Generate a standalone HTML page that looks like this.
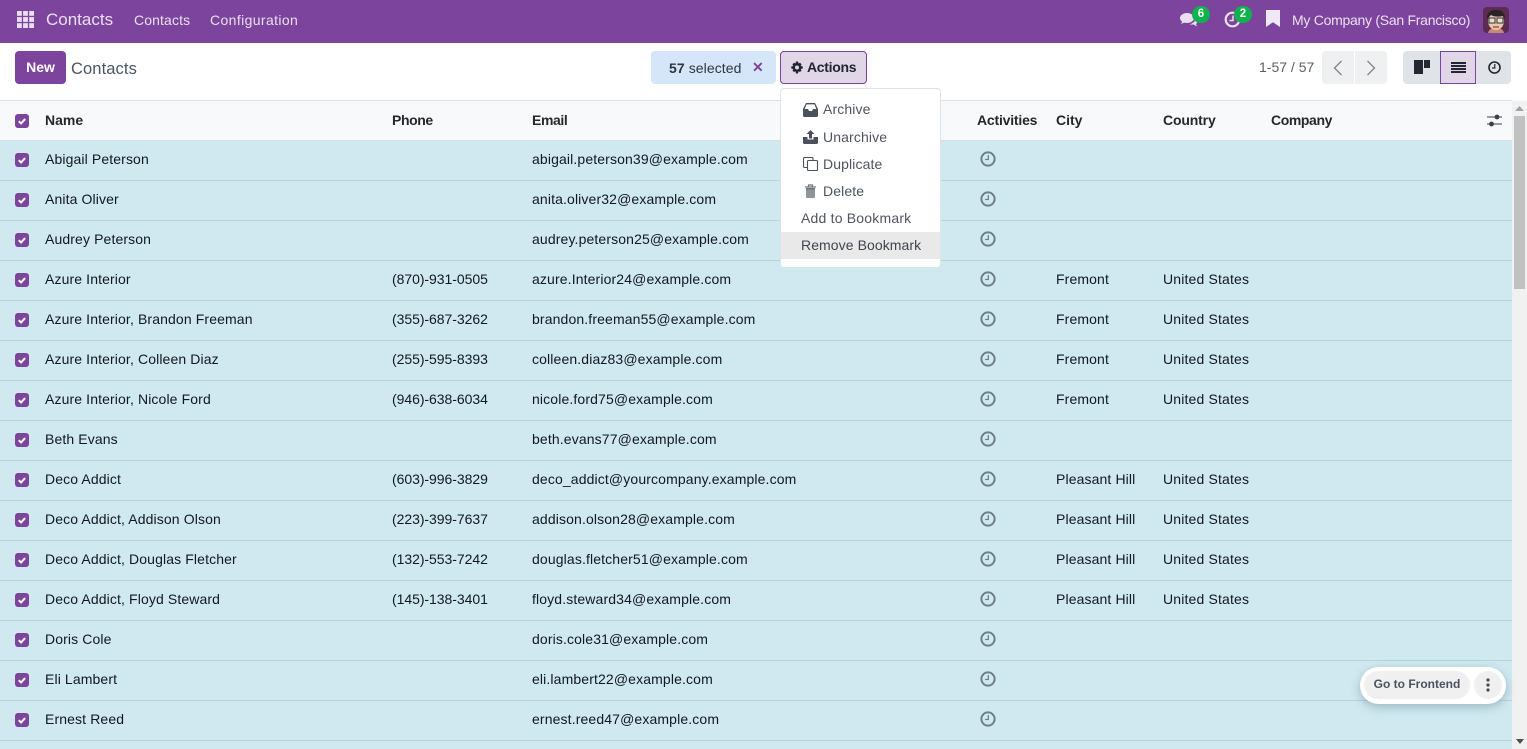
<!DOCTYPE html>
<html lang="en"><head><meta charset="utf-8"><title>Contacts</title>
<style>
*{box-sizing:border-box}
html,body{margin:0;padding:0;width:1527px;height:749px;overflow:hidden;background:#fff}
body{position:relative;font-family:"Liberation Sans",sans-serif;font-size:14px;color:#111827}
.a{position:absolute;white-space:nowrap}
.nav{position:absolute;left:0;top:0;width:1527px;height:43px;background:#7c449c}
.nav .a{color:#eadff0;line-height:20px;top:10px}
.btn{position:absolute;border-radius:4px}
.list{position:absolute;left:0;top:100px;width:1512px;height:649px;overflow:hidden}
.head{position:absolute;left:0;top:0;width:1512px;height:41px;background:#f8f9fb;border-top:1px solid #dee2e6;border-bottom:1px solid #d8dde3}
.head .a{top:9px;line-height:20px;font-weight:bold;color:#25282d}
.r{position:absolute;left:0;width:1512px;height:40px;background:#d0e9f1;border-bottom:1px solid #b8d3dc}
.r .a{top:8px;line-height:20px;color:#101820}
.n{left:45px;letter-spacing:.12px}.p{left:392px;letter-spacing:-.05px}.e{left:532px;letter-spacing:.13px}.c{left:1056px;letter-spacing:.12px}.y{left:1163px;letter-spacing:.16px}
.cb{position:absolute;left:15px;width:14px;height:14px;background:#7c449c;border-radius:3px}
.r .cb{top:12px}
.cb svg{position:absolute;left:0;top:0}
.clk{position:absolute;left:980px;top:10px}
.menu{position:absolute;left:780px;top:88px;width:161px;height:180px;background:#fff;border:1px solid #dfe3e8;border-radius:4px;z-index:3}
.mi{position:absolute;color:#4f5560;line-height:20px;white-space:nowrap;letter-spacing:.12px}
.menu svg{position:absolute}
</style></head><body>

<svg width="0" height="0" style="position:absolute"><defs>
<symbol id="ck" viewBox="0 0 14 14"><path d="M3.800 7.200l2.200 2.200 4.200-4.400" fill="none" stroke="#fff" stroke-width="2"/></symbol>
<symbol id="cl" viewBox="0 0 16 16"><circle cx="8" cy="8" r="6.600" fill="none" stroke="#6f7f88" stroke-width="2"/><path d="M8.300 4v4.500H5" fill="none" stroke="#6f7f88" stroke-width="1.300"/></symbol>
</defs></svg>

<div class="nav">
<svg class="a" style="left:17px;top:11px" width="17" height="17" viewBox="0 0 17 17" fill="#eadff0"><rect x="0" y="0" width="4.800" height="4.800"/><rect x="6.100" y="0" width="4.800" height="4.800"/><rect x="12.200" y="0" width="4.800" height="4.800"/><rect x="0" y="6.100" width="4.800" height="4.800"/><rect x="6.100" y="6.100" width="4.800" height="4.800"/><rect x="12.200" y="6.100" width="4.800" height="4.800"/><rect x="0" y="12.200" width="4.800" height="4.800"/><rect x="6.100" y="12.200" width="4.800" height="4.800"/><rect x="12.200" y="12.200" width="4.800" height="4.800"/></svg>
<span class="a" style="left:46px;font-size:17px">Contacts</span>
<span class="a" style="left:134px;letter-spacing:.12px">Contacts</span>
<span class="a" style="left:210px;letter-spacing:.38px">Configuration</span>
<svg class="a" style="left:1180px;top:11px" width="18" height="16" viewBox="0 0 18 16" fill="#eadff0"><ellipse cx="7" cy="7" rx="7" ry="5"/><path d="M2.500 10l-1.500 3 4.500-2z"/><path d="M15.500 8.500c2 1.500 2 3.500.5 4.500l1 2.500-3.500-2H9c2.500-.5 6-2.500 6.500-5z"/></svg>
<div class="a" style="left:1192px;top:6px;width:18px;height:17px;border-radius:9px;background:#0fb34d;color:#fff;font-size:11.500px;font-weight:bold;text-align:center;line-height:17px">6</div>
<svg class="a" style="left:1224px;top:11px" width="17" height="17" viewBox="0 0 17 17"><circle cx="8.500" cy="8.500" r="6.800" fill="none" stroke="#eadff0" stroke-width="2.200"/><path d="M9 4.500V9.500H5.500" fill="none" stroke="#eadff0" stroke-width="1.500"/></svg>
<div class="a" style="left:1234px;top:6px;width:18px;height:17px;border-radius:9px;background:#0fb34d;color:#fff;font-size:11.500px;font-weight:bold;text-align:center;line-height:17px">2</div>
<svg class="a" style="left:1266px;top:10px" width="14" height="17" viewBox="0 0 14 17"><path d="M0 0h14v17L7 12.200 0 17z" fill="#f0e8f5"/></svg>
<span class="a" style="left:1292px;letter-spacing:-.27px">My Company (San Francisco)</span>
<svg class="a" style="left:1483px;top:7px;border-radius:4px" width="26" height="26" viewBox="0 0 26 26"><rect width="26" height="26" fill="#5d2c55"/><path d="M5 26c1-4 4-5 8-5s7 1 8 5z" fill="#c98a70"/><ellipse cx="13" cy="14" rx="8" ry="9" fill="#ecc6a8"/><path d="M4 12C3 5 9 2 14 3c5 0 8 3 8 9l-2-3c-4 1-9 1-12-1z" fill="#2b2426"/><rect x="6" y="11" width="6" height="5" fill="#e2e2da" stroke="#333" stroke-width="1"/><rect x="14" y="11" width="6" height="5" fill="#e2e2da" stroke="#333" stroke-width="1"/><path d="M10 20h6" stroke="#9a5a4a" stroke-width="1.500"/></svg>
</div>

<!-- control panel -->
<div class="btn" style="left:15px;top:51px;width:51px;height:33px;background:#7c449c;color:#fff;font-weight:bold;text-align:center;line-height:32px">New</div>
<span class="a" style="left:71px;top:58px;font-size:16.500px;line-height:22px;color:#4b5563;letter-spacing:.1px">Contacts</span>

<div class="btn" style="left:651px;top:51px;width:125px;height:33px;background:#d6e6f9"></div>
<span class="a" style="left:669px;top:58px;line-height:20px;color:#2f3640;letter-spacing:.08px"><b>57</b> selected</span>
<span class="a" style="left:752px;top:57px;line-height:20px;color:#7c449c;font-weight:bold;font-size:14px">&#x2715;</span>
<div class="btn" style="left:780px;top:51px;width:87px;height:33px;background:#e0d6e8;border:1px solid #7c449c"></div>
<svg class="a" style="left:791px;top:61px" width="12" height="13" viewBox="0 0 24 24"><path fill="#1f2430" d="M10 0h4l1 4 3-1.500 3 3L19.500 9l4 1v4l-4 1 1.500 3-3 3-3-1.500-1 4.500h-4l-1-4.500L6 21l-3-3 1.500-3-4-1v-4l4-1L3 5.500l3-3L9 4zM12 8a4 4 0 100 8 4 4 0 000-8z"/></svg>
<span class="a" style="left:807px;top:57px;line-height:20px;font-weight:bold;color:#22262e;letter-spacing:-.3px">Actions</span>

<span class="a" style="left:1259px;top:57px;line-height:20px;color:#5a5f68">1-57 / 57</span>
<div class="btn" style="left:1322px;top:51px;width:32px;height:33px;background:#eef0f2;border-radius:4px 0 0 4px"></div>
<div class="btn" style="left:1355px;top:51px;width:32px;height:33px;background:#eef0f2;border-radius:0 4px 4px 0"></div>
<svg class="a" style="left:1333px;top:60px" width="10" height="16" viewBox="0 0 10 16"><path d="M8.500 1L1.500 8l7 7" fill="none" stroke="#7e858d" stroke-width="1.300"/></svg>
<svg class="a" style="left:1366px;top:60px" width="10" height="16" viewBox="0 0 10 16"><path d="M1.500 1l7 7-7 7" fill="none" stroke="#7e858d" stroke-width="1.300"/></svg>
<div class="btn" style="left:1403px;top:51px;width:37px;height:33px;background:#e0e3e7;border-radius:4px 0 0 4px"></div>
<svg class="a" style="left:1414px;top:60px" width="16" height="14" viewBox="0 0 16 14" fill="#23272f"><rect x="0" y="0" width="9" height="14"/><rect x="10" y="0" width="6" height="8"/></svg>
<div class="btn" style="left:1440px;top:51px;width:36px;height:33px;background:#e0d6e8;border:1px solid #7c449c;border-radius:0"></div>
<svg class="a" style="left:1451px;top:62px" width="15" height="11" viewBox="0 0 15 11" fill="#23272f"><rect y="0" width="15" height="2"/><rect y="3" width="15" height="2"/><rect y="6" width="15" height="2"/><rect y="9" width="15" height="2"/></svg>
<div class="btn" style="left:1476px;top:51px;width:35px;height:33px;background:#e0e3e7;border-radius:0 4px 4px 0"></div>
<svg class="a" style="left:1488px;top:61px" width="13" height="13" viewBox="0 0 13 13"><circle cx="6.500" cy="6.500" r="5.500" fill="none" stroke="#23272f" stroke-width="1.600"/><path d="M6.800 3v4H4" fill="none" stroke="#23272f" stroke-width="1.200"/></svg>

<!-- list -->
<div class="list">
<div class="head">
<div class="cb" style="top:13px"><svg width="14" height="14"><use href="#ck"/></svg></div>
<span class="a" style="left:45px">Name</span>
<span class="a" style="left:392px;letter-spacing:-.4px">Phone</span>
<span class="a" style="left:532px;letter-spacing:-.4px">Email</span>
<span class="a" style="left:977px;letter-spacing:-.2px">Activities</span>
<span class="a" style="left:1056px">City</span>
<span class="a" style="left:1163px;letter-spacing:-.15px">Country</span>
<span class="a" style="left:1271px;letter-spacing:-.4px">Company</span>
<svg class="a" style="left:1486px;top:11px" width="16" height="16" viewBox="0 0 16 16"><path d="M1 5h15M1 12h15" stroke="#3a3f4a" stroke-width="1"/><circle cx="11" cy="5" r="2.400" fill="#3a3f4a"/><circle cx="5.500" cy="12" r="2.400" fill="#3a3f4a"/></svg>
</div>

<div class="r" style="top:41px"><div class="cb"><svg width="14" height="14"><use href="#ck"/></svg></div><span class="a n">Abigail Peterson</span><span class="a e">abigail.peterson39@example.com</span><svg class="clk" width="16" height="16"><use href="#cl"/></svg></div>
<div class="r" style="top:81px"><div class="cb"><svg width="14" height="14"><use href="#ck"/></svg></div><span class="a n">Anita Oliver</span><span class="a e">anita.oliver32@example.com</span><svg class="clk" width="16" height="16"><use href="#cl"/></svg></div>
<div class="r" style="top:121px"><div class="cb"><svg width="14" height="14"><use href="#ck"/></svg></div><span class="a n">Audrey Peterson</span><span class="a e">audrey.peterson25@example.com</span><svg class="clk" width="16" height="16"><use href="#cl"/></svg></div>
<div class="r" style="top:161px"><div class="cb"><svg width="14" height="14"><use href="#ck"/></svg></div><span class="a n">Azure Interior</span><span class="a p">(870)-931-0505</span><span class="a e">azure.Interior24@example.com</span><svg class="clk" width="16" height="16"><use href="#cl"/></svg><span class="a c">Fremont</span><span class="a y">United States</span></div>
<div class="r" style="top:201px"><div class="cb"><svg width="14" height="14"><use href="#ck"/></svg></div><span class="a n">Azure Interior, Brandon Freeman</span><span class="a p">(355)-687-3262</span><span class="a e">brandon.freeman55@example.com</span><svg class="clk" width="16" height="16"><use href="#cl"/></svg><span class="a c">Fremont</span><span class="a y">United States</span></div>
<div class="r" style="top:241px"><div class="cb"><svg width="14" height="14"><use href="#ck"/></svg></div><span class="a n">Azure Interior, Colleen Diaz</span><span class="a p">(255)-595-8393</span><span class="a e">colleen.diaz83@example.com</span><svg class="clk" width="16" height="16"><use href="#cl"/></svg><span class="a c">Fremont</span><span class="a y">United States</span></div>
<div class="r" style="top:281px"><div class="cb"><svg width="14" height="14"><use href="#ck"/></svg></div><span class="a n">Azure Interior, Nicole Ford</span><span class="a p">(946)-638-6034</span><span class="a e">nicole.ford75@example.com</span><svg class="clk" width="16" height="16"><use href="#cl"/></svg><span class="a c">Fremont</span><span class="a y">United States</span></div>
<div class="r" style="top:321px"><div class="cb"><svg width="14" height="14"><use href="#ck"/></svg></div><span class="a n">Beth Evans</span><span class="a e">beth.evans77@example.com</span><svg class="clk" width="16" height="16"><use href="#cl"/></svg></div>
<div class="r" style="top:361px"><div class="cb"><svg width="14" height="14"><use href="#ck"/></svg></div><span class="a n">Deco Addict</span><span class="a p">(603)-996-3829</span><span class="a e">deco_addict@yourcompany.example.com</span><svg class="clk" width="16" height="16"><use href="#cl"/></svg><span class="a c">Pleasant Hill</span><span class="a y">United States</span></div>
<div class="r" style="top:401px"><div class="cb"><svg width="14" height="14"><use href="#ck"/></svg></div><span class="a n">Deco Addict, Addison Olson</span><span class="a p">(223)-399-7637</span><span class="a e">addison.olson28@example.com</span><svg class="clk" width="16" height="16"><use href="#cl"/></svg><span class="a c">Pleasant Hill</span><span class="a y">United States</span></div>
<div class="r" style="top:441px"><div class="cb"><svg width="14" height="14"><use href="#ck"/></svg></div><span class="a n">Deco Addict, Douglas Fletcher</span><span class="a p">(132)-553-7242</span><span class="a e">douglas.fletcher51@example.com</span><svg class="clk" width="16" height="16"><use href="#cl"/></svg><span class="a c">Pleasant Hill</span><span class="a y">United States</span></div>
<div class="r" style="top:481px"><div class="cb"><svg width="14" height="14"><use href="#ck"/></svg></div><span class="a n">Deco Addict, Floyd Steward</span><span class="a p">(145)-138-3401</span><span class="a e">floyd.steward34@example.com</span><svg class="clk" width="16" height="16"><use href="#cl"/></svg><span class="a c">Pleasant Hill</span><span class="a y">United States</span></div>
<div class="r" style="top:521px"><div class="cb"><svg width="14" height="14"><use href="#ck"/></svg></div><span class="a n">Doris Cole</span><span class="a e">doris.cole31@example.com</span><svg class="clk" width="16" height="16"><use href="#cl"/></svg></div>
<div class="r" style="top:561px"><div class="cb"><svg width="14" height="14"><use href="#ck"/></svg></div><span class="a n">Eli Lambert</span><span class="a e">eli.lambert22@example.com</span><svg class="clk" width="16" height="16"><use href="#cl"/></svg></div>
<div class="r" style="top:601px"><div class="cb"><svg width="14" height="14"><use href="#ck"/></svg></div><span class="a n">Ernest Reed</span><span class="a e">ernest.reed47@example.com</span><svg class="clk" width="16" height="16"><use href="#cl"/></svg></div>
<div class="r" style="top:641px"></div>
</div>

<!-- scrollbar -->
<div class="a" style="left:1512px;top:101px;width:15px;height:648px;background:#f1f1f1"></div>
<div class="a" style="left:1514px;top:116px;width:11px;height:173px;background:#c1c1c1"></div>
<svg class="a" style="left:1515px;top:106px" width="9" height="6"><path d="M4.500 0L9 5H0z" fill="#a3a3a3"/></svg>
<svg class="a" style="left:1516px;top:739px" width="8" height="5"><path d="M0 0h8L4 5z" fill="#505050"/></svg>

<!-- dropdown -->
<div class="menu">
<svg style="left:22px;top:14px" width="15" height="14" viewBox="0 0 15 14"><path d="M3 0h9l3 6v6.500a1.500 1.500 0 01-1.500 1.500h-12A1.500 1.500 0 010 12.500V6z" fill="#4a505c"/><path d="M3.600 1.400h7.800L13.300 6H10L9 8H6L5 6H1.700z" fill="#fff"/></svg>
<span class="mi" style="left:42px;top:10px">Archive</span>
<svg style="left:22px;top:41px" width="15" height="14" viewBox="0 0 15 14" fill="#4a505c"><path d="M7.500 0L11.500 4H9v4.500H6V4H3.500z"/><path d="M0 7h4.500v2.500h6V7H15v5.500a1.500 1.500 0 01-1.500 1.500h-12A1.500 1.500 0 010 12.500z"/></svg>
<span class="mi" style="left:42px;top:38px">Unarchive</span>
<svg style="left:22px;top:68px" width="15" height="14" viewBox="0 0 15 14" fill="none" stroke="#4a505c" stroke-width="1.100"><path d="M4 10.500H1.500a1 1 0 01-1-1V1.500a1 1 0 011-1H9a1 1 0 011 1V3"/><rect x="4.500" y="3.500" width="10" height="10" rx="1"/></svg>
<span class="mi" style="left:42px;top:65px">Duplicate</span>
<svg style="left:23px;top:95px" width="13" height="14" viewBox="0 0 13 14"><path d="M1 3h11M4.500 3V1h4v2" fill="none" stroke="#70757e" stroke-width="1.200"/><path d="M2 4.500h9V13a1 1 0 01-1 1H3a1 1 0 01-1-1z" fill="#8f949b"/><path d="M2 4h9v1.500H2z" fill="#6e737c"/></svg>
<span class="mi" style="left:42px;top:92px">Delete</span>
<span class="mi" style="left:20px;top:119px;letter-spacing:.2px">Add to Bookmark</span>
<div style="position:absolute;left:0;top:143px;width:159px;height:27px;background:#e9e9e9"></div>
<span class="mi" style="left:20px;top:146px;color:#3f444e;letter-spacing:.08px">Remove Bookmark</span>
</div>

<!-- frontend pill -->
<div class="a" style="left:1360px;top:667px;width:146px;height:37px;background:#fff;border-radius:19px;box-shadow:0 3px 10px rgba(60,90,100,.35);z-index:4"></div>
<div class="a" style="left:1364px;top:671px;width:106px;height:28px;background:#f0f0f0;border-radius:14px;z-index:5;text-align:center;font-weight:bold;font-size:12px;line-height:27px;color:#4a5260">Go to Frontend</div>
<div class="a" style="left:1474px;top:671px;width:28px;height:28px;background:#f0f0f0;border-radius:50%;z-index:5"></div>
<svg class="a" style="left:1486px;top:678px;z-index:6" width="4" height="14"><circle cx="2" cy="2" r="1.600" fill="#454b56"/><circle cx="2" cy="7" r="1.600" fill="#454b56"/><circle cx="2" cy="12" r="1.600" fill="#454b56"/></svg>

</body></html>
